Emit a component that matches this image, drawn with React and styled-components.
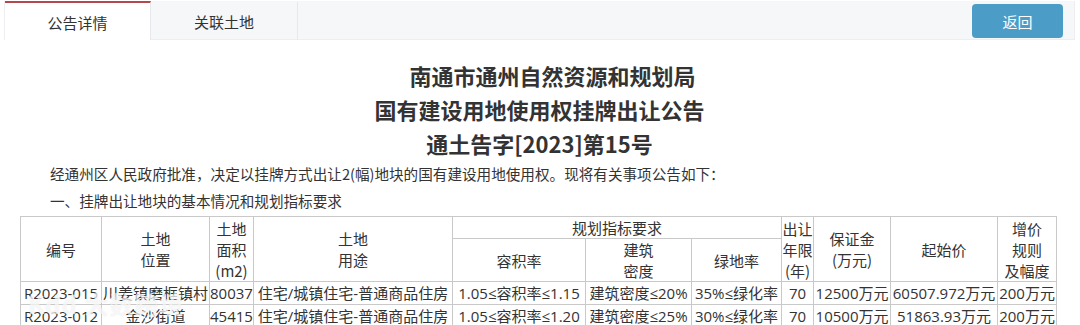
import React from "react";
import styled, { createGlobalStyle } from "styled-components";

const Global = createGlobalStyle`
  html, body { margin: 0; padding: 0; background: #fff; }
  body { font-family: "Open Sans", "Noto Sans CJK SC", sans-serif; color: #333; }
  * { box-sizing: border-box; }
`;

const Page = styled.div`
  position: relative;
  width: 1080px;
  height: 325px;
  overflow: hidden;
  padding: 1px 5px 0 4px;
`;

const TabBar = styled.div`
  display: flex;
  align-items: stretch;
  height: 39px;
  background: #f6f7f9;
  border: 1px solid #eceef1;
  border-top: none;
`;

const Tab = styled.div`
  width: ${(p) => (p.$active ? 146 : 147)}px;
  display: flex;
  align-items: center;
  justify-content: center;
  font-size: 15px;
  color: #333;
  font-family: "Noto Sans CJK SC", sans-serif;
  background: ${(p) => (p.$active ? "#fff" : "transparent")};
  border-top: 2px solid ${(p) => (p.$active ? "#b5484d" : "transparent")};
  border-right: 1px solid #e6e8eb;
  margin-bottom: -1px;
  padding-top: ${(p) => (p.$active ? 2 : 0)}px;
`;

const Spacer = styled.div`
  flex: 1;
`;

const BackButton = styled.button`
  align-self: flex-start;
  margin: 3px 11px 0 0;
  width: 91px;
  height: 34px;
  border: none;
  border-radius: 4px;
  background: #4b9dc8;
  color: #fff;
  font-size: 15px;
  font-family: "Noto Sans CJK SC", sans-serif;
  cursor: pointer;
`;

const Content = styled.div`
  padding: 18px 0 0 16px;
`;

const Title = styled.div`
  text-align: center;
  font-family: "Noto Sans CJK SC", sans-serif;
  font-weight: 700;
  font-size: 22px;
  line-height: 34px;
  color: #333;
  padding-left: ${(p) => p.$indent || 0}px;
  margin-right: 16px;
`;

const Para = styled.p`
  margin: 0;
  font-family: "Noto Sans CJK SC", sans-serif;
  font-size: 14.6px;
  line-height: 27px;
  text-indent: 30px;
  color: #333;
`;

const Table = styled.table`
  margin-top: 2px;
  width: 1036px;
  table-layout: fixed;
  border-collapse: collapse;
  font-size: 15px;
  color: #333;
`;

const Cell = styled.td`
  border: 1px solid #c9c9c9;
  padding: 0;
  text-align: center;
  vertical-align: middle;
  line-height: 21px;
  white-space: nowrap;
  overflow: hidden;
  font-family: "Noto Sans CJK SC", sans-serif;
`;

const Num = styled.span`
  font-family: "Open Sans", "Noto Sans CJK SC", sans-serif;
`;

const Watermark = styled.div`
  position: absolute;
  left: 28px;
  top: 286px;
  font-family: "Noto Sans CJK SC", sans-serif;
  font-size: 24px;
  font-weight: 700;
  color: rgba(255, 255, 255, 0.65);
  letter-spacing: 1px;
  pointer-events: none;
  text-shadow: 0 0 1px rgba(200, 200, 200, 0.4);
`;

const widths = [81, 108, 44, 199, 133, 106, 90, 32, 77, 107, 59];

const rows = [
  ["R2023-015", "川姜镇磨框镇村", "80037", "住宅/城镇住宅-普通商品住房", "1.05≤容积率≤1.15", "建筑密度≤20%", "35%≤绿化率", "70", "12500万元", "60507.972万元", "200万元"],
  ["R2023-012", "金沙街道", "45415", "住宅/城镇住宅-普通商品住房", "1.05≤容积率≤1.20", "建筑密度≤25%", "30%≤绿化率", "70", "10500万元", "51863.93万元", "200万元"],
];

const Lines = ({ items }) =>
  items.map((t, i) => (
    <React.Fragment key={i}>
      {i > 0 && <br />}
      {t}
    </React.Fragment>
  ));

export default function App() {
  return (
    <>
      <Global />
      <Page>
        <TabBar>
          <Tab $active>公告详情</Tab>
          <Tab>关联土地</Tab>
          <Spacer />
          <BackButton>返回</BackButton>
        </TabBar>
        <Content>
          <Title $indent={26}>南通市通州自然资源和规划局</Title>
          <Title>国有建设用地使用权挂牌出让公告</Title>
          <Title>通土告字[2023]第15号</Title>
          <Para>经通州区人民政府批准，决定以挂牌方式出让2(幅)地块的国有建设用地使用权。现将有关事项公告如下：</Para>
          <Para>一、挂牌出让地块的基本情况和规划指标要求</Para>
          <Table>
            <colgroup>
              {widths.map((w, i) => (
                <col key={i} style={{ width: w }} />
              ))}
            </colgroup>
            <tbody>
              <tr>
                <Cell rowSpan={2}>编号</Cell>
                <Cell rowSpan={2}><Lines items={["土地", "位置"]} /></Cell>
                <Cell rowSpan={2}><Lines items={["土地", "面积", "(m2)"]} /></Cell>
                <Cell rowSpan={2}><Lines items={["土地", "用途"]} /></Cell>
                <Cell colSpan={3}>规划指标要求</Cell>
                <Cell rowSpan={2}><Lines items={["出让", "年限", "(年)"]} /></Cell>
                <Cell rowSpan={2}><Lines items={["保证金", "(万元)"]} /></Cell>
                <Cell rowSpan={2}>起始价</Cell>
                <Cell rowSpan={2}><Lines items={["增价", "规则", "及幅度"]} /></Cell>
              </tr>
              <tr>
                <Cell>容积率</Cell>
                <Cell><Lines items={["建筑", "密度"]} /></Cell>
                <Cell>绿地率</Cell>
              </tr>
              {rows.map((r, i) => (
                <tr key={i}>
                  {r.map((c, j) => (
                    <Cell key={j} style={{ height: 22 }}>
                      <Num>{c}</Num>
                    </Cell>
                  ))}
                </tr>
              ))}
            </tbody>
          </Table>
        </Content>
        <Watermark>Kdd 大数跨境</Watermark>
      </Page>
    </>
  );
}
